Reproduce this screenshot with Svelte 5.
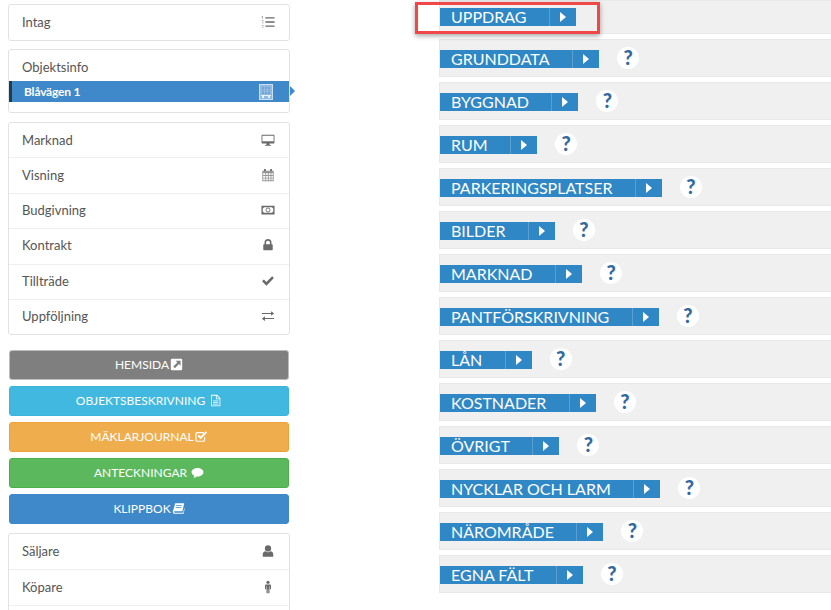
<script>
  const market = [
    { label: "Marknad", icon: "desktop" },
    { label: "Visning", icon: "calendar" },
    { label: "Budgivning", icon: "money" },
    { label: "Kontrakt", icon: "lock" },
    { label: "Tillträde", icon: "check" },
    { label: "Uppföljning", icon: "swap" }
  ];

  const buttons = [
    { label: "HEMSIDA", icon: "share", kind: "grey" },
    { label: "OBJEKTSBESKRIVNING", icon: "file", kind: "cyan", spaced: true },
    { label: "MÄKLARJOURNAL", icon: "checkbox", kind: "warning" },
    { label: "ANTECKNINGAR", icon: "comment", kind: "success", spaced: true },
    { label: "KLIPPBOK", icon: "book", kind: "primary" }
  ];

  const people = [
    { label: "Säljare", icon: "user" },
    { label: "Köpare", icon: "male" }
  ];

  const sections = [
    "Uppdrag", "Grunddata", "Byggnad", "Rum", "Parkeringsplatser", "Bilder", "Marknad",
    "Pantförskrivning", "Lån", "Kostnader", "Övrigt", "Nycklar och larm", "Närområde", "Egna fält"
  ];
</script>

{#snippet icon(name)}
  <svg class="icon" viewBox="0 0 16 16" width="16" height="16" fill="currentColor">
    {#if name === "list"}
      <path d="M5 2.500h10.500v1.600H5zM5 7.200h10.500v1.600H5zM5 11.900h10.500v1.600H5z" />
      <path d="M1 1h1.300v3H1zM1 6h2v1H1zM1 8.500h2v1H1zM1 11.500h2v.8H1zM1 13.500h2v.8H1z" opacity=".6" />
    {:else if name === "desktop"}
      <path d="M1.500 2h13a.9.9 0 0 1 .9.9v8.200a.9.9 0 0 1-.9.9H9.600l.4 1.600h1.500v1h-7v-1H6l.4-1.600H1.500a.9.9 0 0 1-.9-.9V2.900a.9.9 0 0 1 .9-.9zm.1 1v6.800h12.800V3z" />
      <path d="M1.600 9.800h12.800v1H1.600z" />
    {:else if name === "calendar"}
      <path d="M3.500 1h2v2.500h-2zM10.500 1h2v2.500h-2z" />
      <path fill-rule="evenodd" opacity=".7" d="M1.500 3h13v12h-13zM2.500 6v2h2.400V6zm3.400 0v2h2V6zm3 0v2h2V6zm3 0v2h1.600V6zM2.500 9v2h2.400V9zm3.400 0v2h2V9zm3 0v2h2V9zm3 0v2h1.600V9zM2.500 12v2h2.400v-2zm3.400 0v2h2v-2zm3 0v2h2v-2zm3 0v2h1.600v-2z" />
    {:else if name === "money"}
      <path fill-rule="evenodd" d="M.5 3h15v10H.5zM3.500 4.800 2 6.300v3.400l1.500 1.500h9l1.500-1.500V6.300l-1.500-1.500z" />
      <circle cx="8" cy="8" r="2.300" fill="none" stroke="currentColor" stroke-width="1" />
    {:else if name === "lock"}
      <path fill-rule="evenodd" d="M4 7V5.200a4 4 0 0 1 8 0V7h.6a.8.8 0 0 1 .8.800v5.400a.8.8 0 0 1-.8.800H3.400a.8.8 0 0 1-.8-.8V7.800a.8.8 0 0 1 .8-.8zm1.800 0h4.400V5.200a2.200 2.200 0 0 0-4.400 0z" />
    {:else if name === "check"}
      <path d="M6.200 13.300 1.200 8.300l2.100-2.100 2.900 2.900 6.500-6.500 2.100 2.100z" />
    {:else if name === "swap"}
      <path d="M1 4.500h10.500V2.600L15 5.200l-3.500 2.600V5.700H1zM15 10.300H4.500V8.400L1 11l3.500 2.600v-2.100H15z" />
    {:else if name === "share"}
      <path fill-rule="evenodd" d="M2.500 1h11A1.500 1.500 0 0 1 15 2.500v11a1.500 1.500 0 0 1-1.500 1.500h-11A1.500 1.500 0 0 1 1 13.500v-11A1.500 1.500 0 0 1 2.500 1zM7 3.500l2 2-5 5 2 2 5-5 2 2v-6z" />
    {:else if name === "file"}
      <path fill-rule="evenodd" d="M2.500 1H10l4 4v10H2.500zM9.500 2v3.500H13zM3.500 2v12h9.500V6.500H8.500V2zM5 8h6.500v1H5zm0 2h6.500v1H5zm0 2h6.500v1H5z" />
    {:else if name === "checkbox"}
      <path d="M2.800 2.500H11v1.400H2.800a.9.900 0 0 0-.9.900v7.400c0 .5.400.9.900.9h7.400c.5 0 .9-.4.900-.9V9.500l1.400-1.400v4.100a2.300 2.300 0 0 1-2.300 2.300H2.800A2.300 2.300 0 0 1 .5 12.200V4.800a2.300 2.300 0 0 1 2.300-2.300z" />
      <path d="M6.800 11.300 3 7.500l1.700-1.700 2.100 2.100 6.500-6.500L15 3.100z" />
    {:else if name === "comment"}
      <path d="M8 2.500c4 0 7.300 2.300 7.300 5.200S12 12.900 8 12.900H7c-1 .9-2.400 1.500-4 1.700.7-.8 1.200-1.600 1.300-2.500C2.200 11.200.7 9.600.7 7.700.7 4.800 4 2.500 8 2.500z" />
    {:else if name === "book"}
      <path fill-rule="evenodd" d="M4 1.500h11l-2.200 10H3.500c-.8 0-1 .5-1 .9 0 .5.300.9 1 .9h10.300L15 7.800l.6.5-1.300 6.200H3.300C1.800 14.500 1 13.400 1 12.300c0-.3 0-.6.100-.8zM5 4v1h7V4zM4.500 6.500v1h7v-1z" />
    {:else if name === "user"}
      <circle cx="8" cy="5" r="3.600" />
      <path d="M2 14.500v-2.800c0-1.900 1.400-3.200 3-3.400.8.700 1.900 1.100 3 1.100s2.200-.4 3-1.100c1.600.2 3 1.500 3 3.400v2.800z" />
    {:else if name === "male"}
      <circle cx="8" cy="2.700" r="1.800" />
      <path d="M5.800 5h4.400c.7 0 1.200.5 1.200 1.200v4.300h-1.200V7h-.5v8H8.300v-4.500h-.6V15H6.300V7h-.5v3.500H4.600V6.200C4.600 5.500 5.100 5 5.800 5z" />
    {/if}
  </svg>
{/snippet}

<div class="page">
  <aside class="sidebar">
    <div class="panel">
      <div class="item intag">
        <span>Intag</span>
        <span class="item-icon">{@render icon("list")}</span>
      </div>
    </div>

    <div class="panel object-panel">
      <div class="object-title">Objektsinfo</div>
      <div class="active-row">
        <span>Blåvägen 1</span>
        <svg class="building" viewBox="0 0 14 16" width="14" height="16">
          <rect x="0.500" y="0.500" width="13" height="15" fill="#8fb9df" stroke="#c9dff2" />
          <path d="M3 3h8v7H3z" fill="#6fa3d6" />
          <path d="M3 5.500h8M3 7.500h8M5.500 3v7M8.500 3v7" stroke="#a9c9e8" stroke-width="0.600" />
          <path d="M2 11h10v1H2z" fill="#e4eff9" />
          <path d="M3 12h2v2H3zM9 12h2v2H9z" fill="#e4eff9" />
        </svg>
        <span class="active-arrow"></span>
      </div>
    </div>

    <div class="panel">
      {#each market as row}
        <div class="item">
          <span>{row.label}</span>
          <span class="item-icon">{@render icon(row.icon)}</span>
        </div>
      {/each}
    </div>

    <div class="actions">
      {#each buttons as btn}
        <button class="action {btn.kind}" class:spaced={btn.spaced}>
          <span>{btn.label}</span>
          {@render icon(btn.icon)}
        </button>
      {/each}
    </div>

    <div class="panel people">
      {#each people as row}
        <div class="item">
          <span>{row.label}</span>
          <span class="item-icon">{@render icon(row.icon)}</span>
        </div>
      {/each}
      <div class="item"></div>
    </div>
  </aside>

  <main class="sections">
    {#each sections as name, i}
      <div class="section">
        <div class="bar">
          <span class="bar-label">{name}</span>
          <span class="bar-toggle"></span>
        </div>
        {#if i > 0}
          <span class="help">?</span>
        {/if}
      </div>
    {/each}
    <div class="highlight"></div>
  </main>
</div>

<style>
  :global(body) {
    margin: 0;
    background: #fff;
    overflow: hidden;
  }

  .page {
    display: flex;
    width: 831px;
    height: 610px;
    overflow: hidden;
    font-family: Lato, "Open Sans", sans-serif;
  }

  .sidebar {
    width: 282px;
    margin-left: 8px;
    padding-top: 4px;
    flex-shrink: 0;
  }

  .panel {
    border: 1px solid #e2e2e2;
    border-radius: 3px;
    margin-bottom: 8px;
    background: #fff;
  }

  .item {
    display: flex;
    align-items: center;
    justify-content: space-between;
    box-sizing: border-box;
    height: 35.4px;
    padding: 0 14px 2px 13px;
    color: #555;
    font-size: 13px;
    border-top: 1px solid #eee;
  }

  .item:first-child {
    height: 34.4px;
    padding-bottom: 0;
    border-top: 0;
  }

  .people .item:first-child,
  .item.intag {
    height: 35px;
    padding-bottom: 2px;
  }

  .item-icon {
    display: flex;
    color: #6a6a6a;
  }

  .icon {
    width: 14px;
    height: 14px;
  }

  .object-panel {
    height: 62px;
    margin-bottom: 9px;
  }

  .object-title {
    padding: 9px 13px 0;
    height: 22px;
    line-height: 16px;
    font-size: 13px;
    color: #555;
  }

  .active-row {
    position: relative;
    display: flex;
    align-items: center;
    justify-content: space-between;
    height: 21px;
    padding: 0 16px 0 12px;
    background: #3f88c9;
    border-left: 3px solid #1d3f4d;
    color: #fff;
    font-size: 12px;
    font-weight: 700;
    letter-spacing: -0.2px;
  }

  .active-arrow {
    position: absolute;
    right: -6px;
    top: 5px;
    border-left: 5px solid #3f88c9;
    border-top: 5px solid transparent;
    border-bottom: 5px solid transparent;
  }

  .actions {
    display: flex;
    flex-direction: column;
    gap: 6px;
    margin: 15px 1px 9px;
  }

  .action {
    display: flex;
    align-items: center;
    justify-content: center;
    gap: 1px;
    height: 30px;
    padding: 0 0 2px;
    border: 1px solid transparent;
    border-radius: 3px;
    color: #fff;
    font-family: inherit;
    font-size: 12px;
  }

  .action .icon {
    width: 13px;
    height: 13px;
  }

  .action.spaced {
    gap: 4px;
  }

  .grey {
    background: #7f7f7f;
    border-color: #bdbdbd;
  }

  .cyan {
    background: #41b8df;
    border-color: #3cb3da;
  }

  .warning {
    background: #f0ad4e;
    border-color: #eea236;
  }

  .success {
    background: #5cb85c;
    border-color: #4cae4c;
  }

  .primary {
    background: #3f88c9;
    border-color: #3f88c9;
  }

  .sections {
    position: relative;
    flex: 1;
    margin-left: 149px;
    display: flex;
    flex-direction: column;
    gap: 5px;
  }

  .section {
    display: flex;
    align-items: center;
    gap: 18px;
    height: 36px;
    flex-shrink: 0;
    background: #f0f0f0;
    border: 1px solid #e8e8e8;
    border-right-width: 0;
  }

  .section:first-child {
    height: 32px;
  }

  .section:not(:first-child) .bar {
    margin-top: 2px;
  }

  .bar {
    display: flex;
    align-items: stretch;
    height: 18px;
    background: #2f87c6;
    color: #fff;
  }

  .bar-label {
    padding: 0 22.500px 0 11px;
    font-size: 16px;
    line-height: 18px;
    text-transform: uppercase;
    white-space: nowrap;
    border-right: 1px solid #5a9fd2;
  }

  .bar-toggle {
    position: relative;
    width: 26px;
  }

  .bar-toggle::after {
    content: "";
    position: absolute;
    left: 10px;
    top: 4px;
    border-left: 6px solid #fff;
    border-top: 5px solid transparent;
    border-bottom: 5px solid transparent;
  }

  .help {
    width: 22px;
    height: 22px;
    border-radius: 50%;
    background: #fff;
    color: #33699f;
    font-size: 20px;
    font-weight: 900;
    line-height: 20px;
    text-align: center;
  }

  .highlight {
    position: absolute;
    left: -24px;
    top: 2px;
    width: 179px;
    height: 26px;
    border: 3px solid #f04848;
    box-shadow: 0 2px 5px rgba(0, 0, 0, 0.35);
  }
</style>
